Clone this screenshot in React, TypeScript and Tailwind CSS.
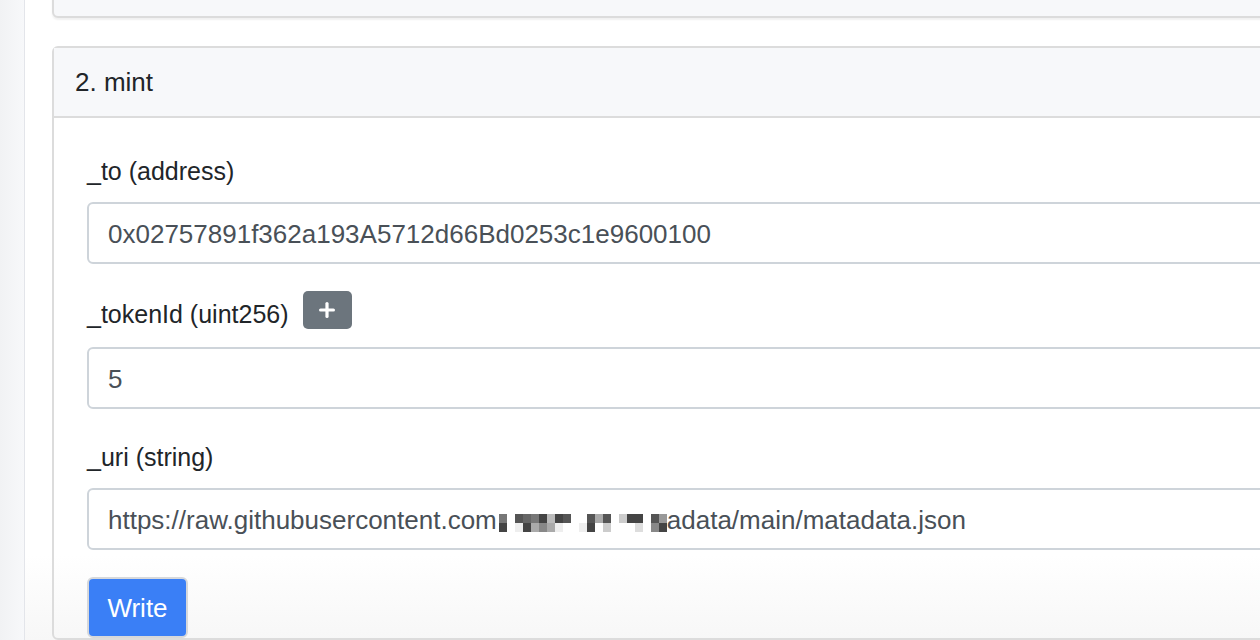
import { Plus } from "lucide-react";

const font = { fontFamily: '"Liberation Sans", Arial, sans-serif' };

// blurred part of the uri, two rows of mosaic cells
const mosaic = [
  ["#777", "#fff", "#555", "#666", "#777", "#444", "#bbb", "#444", "#555", "#fff", "#fff", "#555", "#aaa", "#555", "#fff", "#ccc", "#444", "#444", "#fff", "#555", "#999"],
  ["#444", "#fff", "#eee", "#444", "#aaa", "#888", "#aaa", "#eee", "#fff", "#fff", "#eee", "#444", "#fff", "#ccc", "#fff", "#fff", "#fff", "#ddd", "#fff", "#888", "#444"],
];

export default function App() {
  return (
    <div
      style={font}
      className="relative flex h-[640px] w-[1260px] overflow-hidden bg-[linear-gradient(to_bottom,#ffffff_555px,#f7f7f7_640px)]"
    >
      {/* sidebar edge */}
      <div className="h-full w-[25px] shrink-0 border-r border-[#e3e5ea] bg-gradient-to-r from-[#f1f2f4] to-[#f7f8fa]" />

      <div className="w-[1300px] shrink-0 pl-[27px]">
        {/* previous card, cut off */}
        <div className="-mt-[30px] h-[48px] rounded-b-[6px] border-2 border-[#dcdcdc] bg-[#f7f8fa] shadow-[0_2px_2px_rgba(0,0,0,0.06)]" />

        {/* 2. mint */}
        <div className="mt-[28px] rounded-[6px] border-2 border-[#dcdcdc]">
          <div className="flex h-[70px] items-center border-b-2 border-[#dcdcdc] bg-[#f7f8fa] pl-[21px] text-[26px] text-[#212529]">
            2. mint
          </div>
          <div className="pl-[33px] pt-[35px]">
            <div className="mb-[11px] flex h-[38px] items-center text-[25px] text-[#212529]">_to (address)</div>
            <div className="flex h-[62px] items-center rounded-[6px] border-2 border-[#ced4da] bg-white px-[19px] pt-[2px] text-[26px] text-[#495057]">
              0x02757891f362a193A5712d66Bd0253c1e9600100
            </div>

            <div className="mt-[27px] mb-[18px] flex h-[38px] items-center gap-[14px]">
              <span className="pt-[10px] text-[25px] text-[#212529]">_tokenId (uint256)</span>
              <button className="flex h-[38px] w-[49px] items-center justify-center rounded-[5px] bg-[#6c757d]">
                <Plus size={22} strokeWidth={3.5} className="text-white" />
              </button>
            </div>
            <div className="flex h-[62px] items-center rounded-[6px] border-2 border-[#ced4da] bg-white px-[19px] pt-[2px] text-[26px] text-[#495057]">
              5
            </div>

            <div className="mt-[29px] mb-[12px] flex h-[38px] items-center pt-[2px] text-[25px] text-[#212529]">
              _uri (string)
            </div>
            <div className="flex h-[62px] items-center rounded-[6px] border-2 border-[#ced4da] bg-white px-[19px] pt-[2px] text-[26px] text-[#495057]">
              <span>https://raw.githubusercontent.com</span>
              <span className="ml-[2px] flex w-[168px] flex-col pt-[6px]">
                {mosaic.map((row, r) => (
                  <span key={r} className="flex">
                    {row.map((c, i) => (
                      <span key={i} className="h-[9px] w-[8px]" style={{ backgroundColor: c }} />
                    ))}
                  </span>
                ))}
              </span>
              <span>adata/main/matadata.json</span>
            </div>

            <button className="mt-[27px] h-[61px] w-[101px] rounded-[6px] border-2 border-[#d6d8db] bg-[#3a7ff6] pt-[2px] text-[26px] text-white">
              Write
            </button>
          </div>
        </div>
      </div>
    </div>
  );
}
